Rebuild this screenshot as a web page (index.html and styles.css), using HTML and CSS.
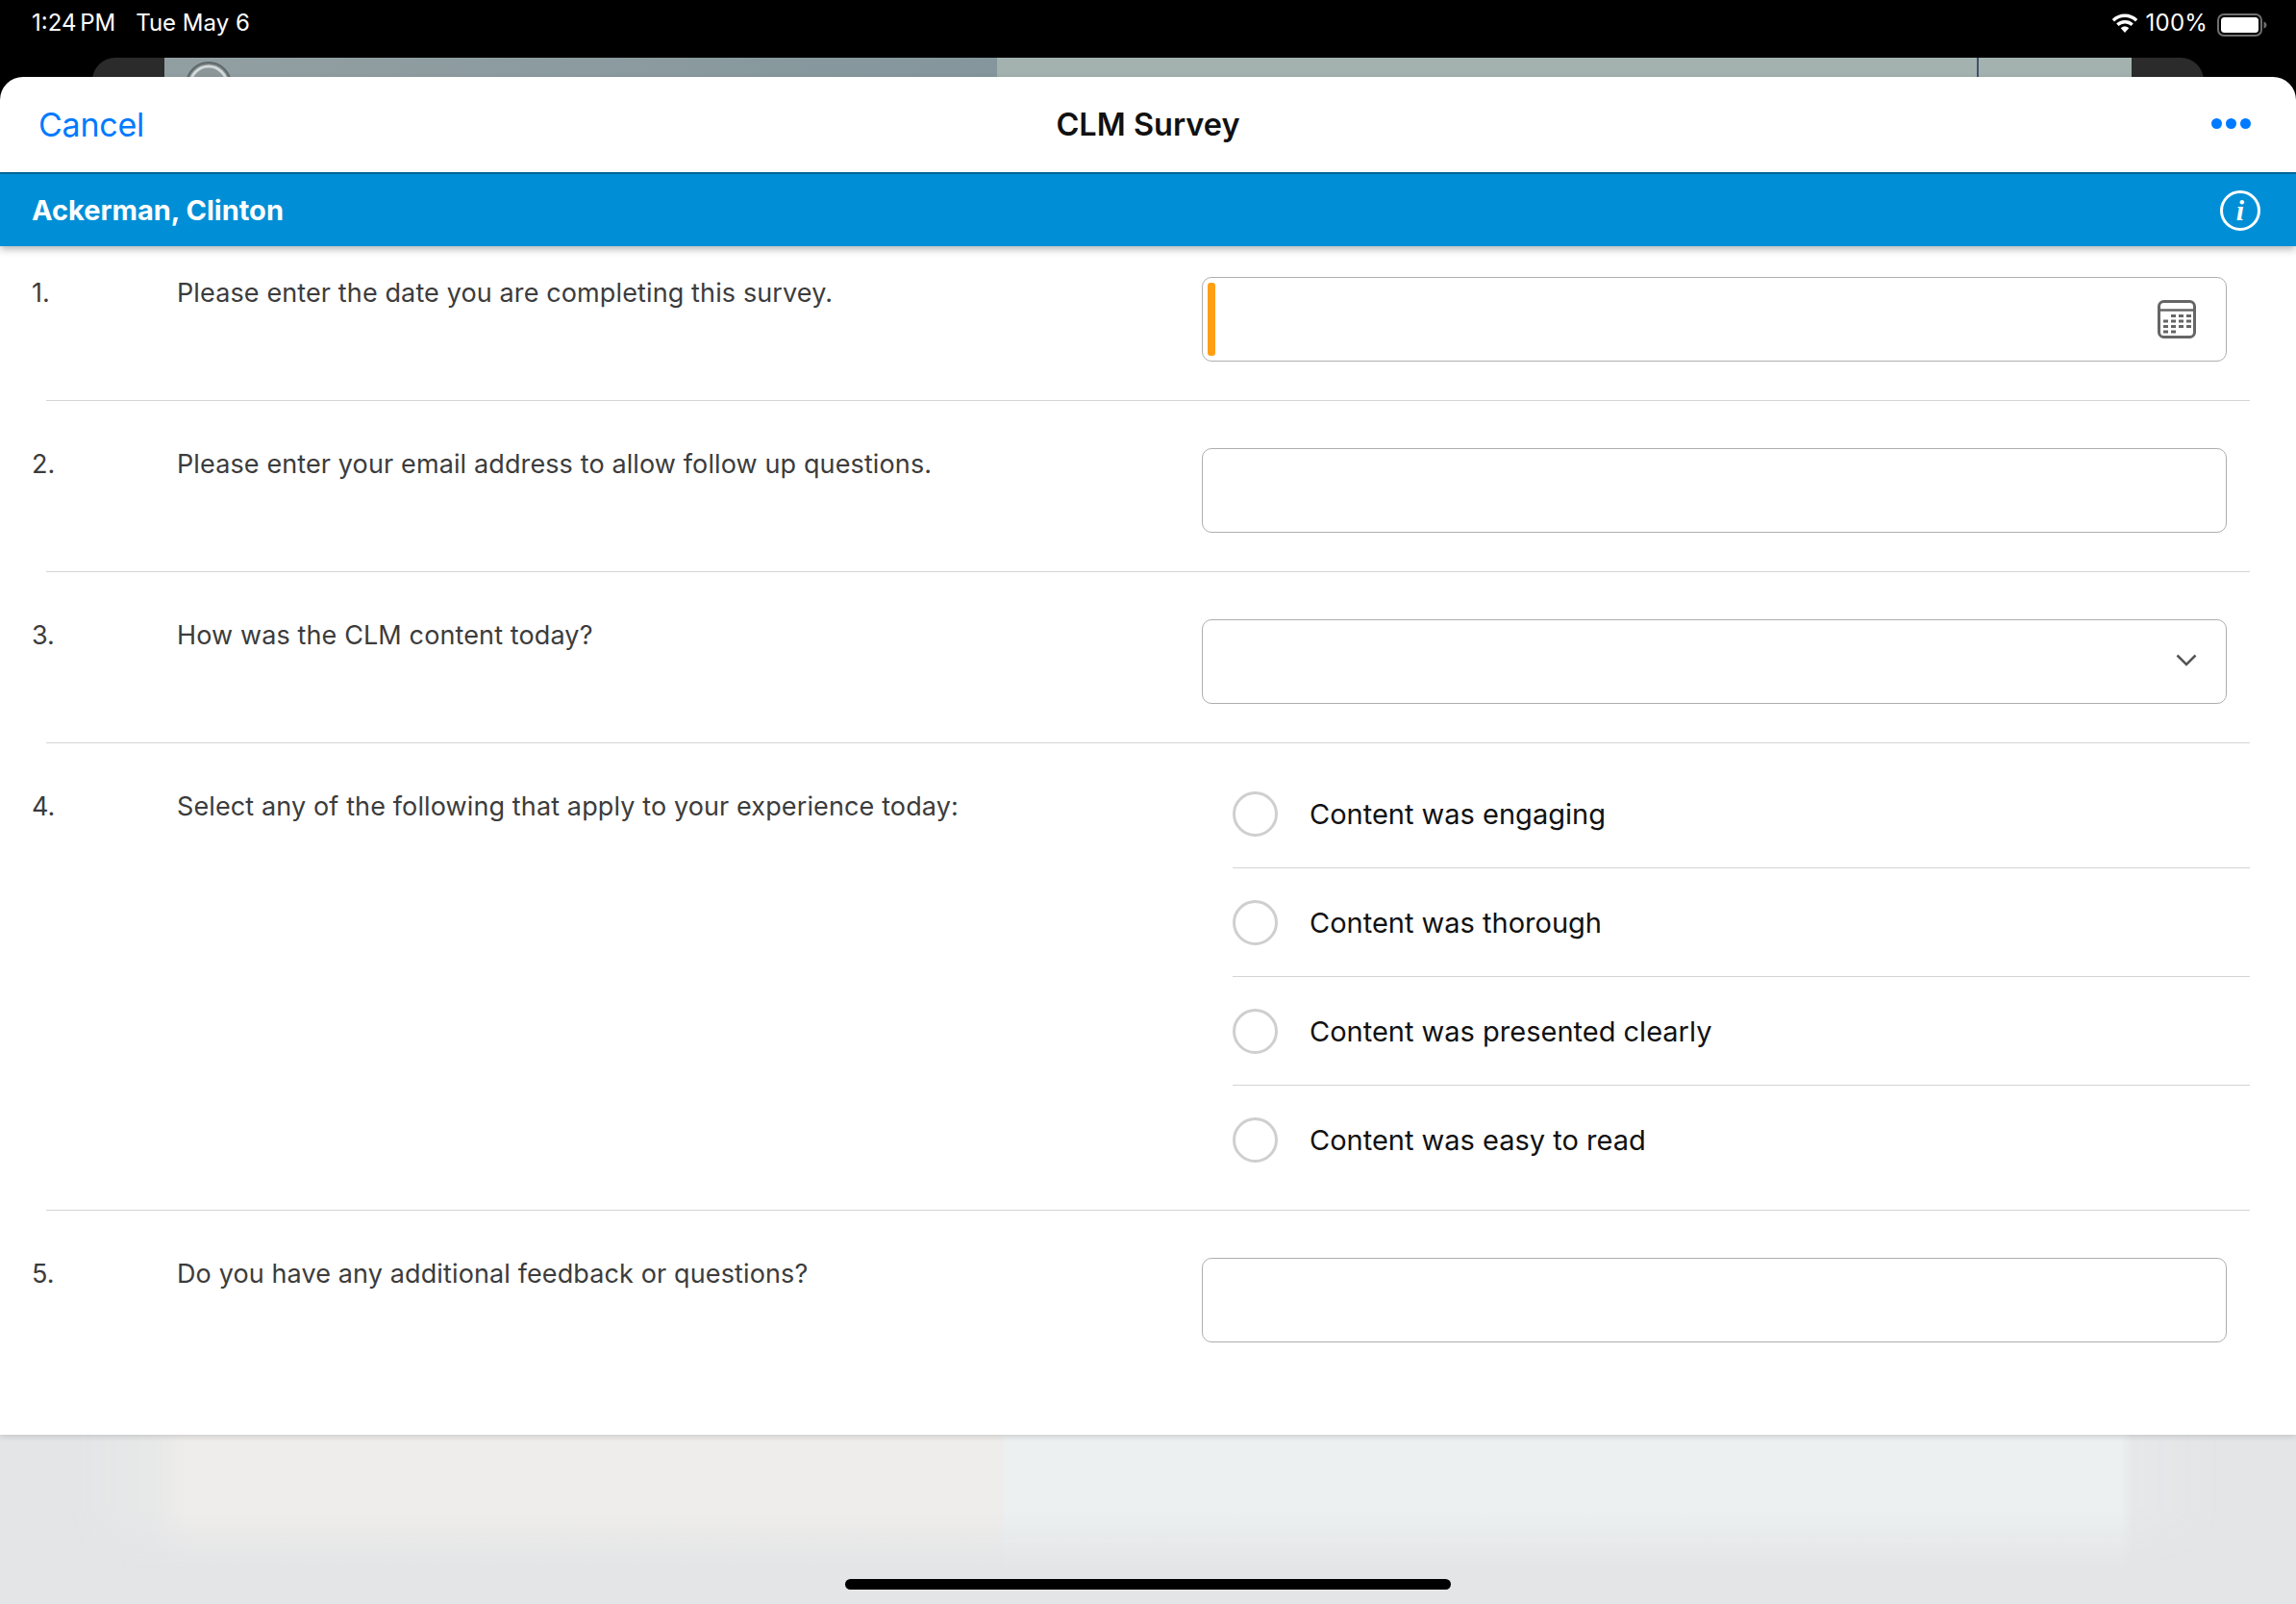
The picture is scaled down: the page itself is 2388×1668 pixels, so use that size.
FILE: index.html
```html
<!DOCTYPE html>
<html lang="en">
<head>
<meta charset="utf-8">
<title>CLM Survey</title>
<link rel="stylesheet" href="styles.css">
</head>
<body>
<header class="status">
  <div class="status-left"><span class="time">1:24 PM</span><span class="date">Tue May 6</span></div>
  <div class="status-right">
    <svg class="wifi" width="32" height="23" viewBox="0 0 28 20"><path fill="#fff" d="M14 4.400c3.700 0 7 1.400 9.600 3.800l2-2.200A16.800 16.800 0 0 0 14 1.200 16.800 16.800 0 0 0 2.400 6l2 2.200A13.900 13.900 0 0 1 14 4.400z"/><path fill="#fff" d="M14 9.900c2.200 0 4.200.8 5.700 2.200l2-2.200A11.300 11.300 0 0 0 14 6.900c-3 0-5.700 1.100-7.700 3l2 2.200A8.300 8.300 0 0 1 14 9.900z"/><path fill="#fff" d="M14 12.700c-1.400 0-2.700.5-3.700 1.400l3.700 4.200 3.700-4.200c-1-.9-2.300-1.400-3.700-1.400z"/></svg>
    <span class="pct">100%</span>
    <svg class="battery" width="52" height="24" viewBox="0 0 52 24"><rect x="1" y="1" width="45" height="22" rx="6" fill="none" stroke="#6e6e6e" stroke-width="2"/><rect x="4" y="4" width="39" height="16" rx="3.500" fill="#fff"/><path d="M48.500 8.500c2 .5 3 2 3 3.500s-1 3-3 3.500z" fill="#6e6e6e"/></svg>
  </div>
</header>
<div class="backdrop">
  <div class="bd-dark bd-dark-left"></div>
  <div class="bd-gray"><svg class="bd-avatar" width="48" height="20" viewBox="0 0 48 20"><circle cx="24" cy="28" r="23" fill="#7f8a8c" stroke="#5f686a" stroke-width="2"/><circle cx="24" cy="28" r="19" fill="#8d9799" stroke="#d3d8d8" stroke-width="3"/></svg></div>
  <div class="bd-green"><span class="bd-line"></span></div>
  <div class="bd-dark bd-dark-right"></div>
</div>
<main class="sheet">
  <nav class="nav">
    <a class="cancel">Cancel</a>
    <h1 class="title">CLM Survey</h1>
    <div class="dots"><i></i><i></i><i></i></div>
  </nav>
  <div class="banner">
    <span class="name">Ackerman, Clinton</span>
    <span class="info">i</span>
  </div>
  <section class="row row-first">
    <span class="num">1.</span>
    <p class="q">Please enter the date you are completing this survey.</p>
    <div class="field">
      <span class="required"></span>
      <svg class="cal" width="40" height="40" viewBox="0 0 40 40"><rect x="1.500" y="1.500" width="37" height="37" rx="5" fill="none" stroke="#666" stroke-width="3"/><path d="M2 10.500h36" stroke="#666" stroke-width="2.500"/><g fill="#666"><rect x="14" y="15" width="5" height="3"/><rect x="22" y="15" width="5" height="3"/><rect x="30" y="15" width="5" height="3"/><rect x="6" y="20.500" width="5" height="3"/><rect x="14" y="20.500" width="5" height="3"/><rect x="22" y="20.500" width="5" height="3"/><rect x="30" y="20.500" width="5" height="3"/><rect x="6" y="26" width="5" height="3"/><rect x="14" y="26" width="5" height="3"/><rect x="22" y="26" width="5" height="3"/><rect x="30" y="26" width="5" height="3"/><rect x="6" y="31.500" width="5" height="3"/><rect x="14" y="31.500" width="5" height="3"/></g></svg>
    </div>
  </section>
  <hr class="divider">
  <section class="row">
    <span class="num">2.</span>
    <p class="q">Please enter your email address to allow follow up questions.</p>
    <div class="field"></div>
  </section>
  <hr class="divider">
  <section class="row">
    <span class="num">3.</span>
    <p class="q">How was the CLM content today?</p>
    <div class="field">
      <svg class="chev" width="22" height="13" viewBox="0 0 22 13"><path d="M1.500 1.500 11 11l9.500-9.500" fill="none" stroke="#555" stroke-width="2.500"/></svg>
    </div>
  </section>
  <hr class="divider">
  <section class="row row-options">
    <span class="num">4.</span>
    <p class="q">Select any of the following that apply to your experience today:</p>
    <ul class="options">
      <li class="option"><span class="radio"></span><span>Content was engaging</span></li>
      <li class="option"><span class="radio"></span><span>Content was thorough</span></li>
      <li class="option"><span class="radio"></span><span>Content was presented clearly</span></li>
      <li class="option"><span class="radio"></span><span>Content was easy to read</span></li>
    </ul>
  </section>
  <hr class="divider">
  <section class="row">
    <span class="num">5.</span>
    <p class="q">Do you have any additional feedback or questions?</p>
    <div class="field"></div>
  </section>
</main>
<footer class="bottom">
  <div class="blur"><div class="blur-warm"></div><div class="blur-cool"></div></div>
  <div class="home"></div>
</footer>
</body>
</html>
```
FILE: styles.css
```css
* { box-sizing: border-box; }
html, body { margin: 0; padding: 0; }
body {
  width: 2388px;
  height: 1668px;
  overflow: hidden;
  background: #000;
  font-family: Inter, Roboto, "Liberation Sans", sans-serif;
}
.status {
  height: 60px;
  display: flex;
  justify-content: space-between;
  align-items: flex-start;
  padding: 9px 30px 0 33px;
  color: #fff;
  font-size: 24px;
  line-height: 30px;
}
.status-left { display: flex; gap: 21px; }
.time { word-spacing: -3px; }
.status-right { display: flex; align-items: center; }
.wifi { margin-right: 6px; margin-top: 1px; }
.pct { margin-right: 10px; letter-spacing: .2px; }
.battery { margin-top: 3px; }

.backdrop {
  height: 20px;
  display: flex;
  padding-left: 96px;
  overflow: hidden;
}
.bd-dark { width: 75px; height: 40px; background: #2b2b2b; }
.bd-dark-left { border-top-left-radius: 24px; }
.bd-dark-right { border-top-right-radius: 24px; }
.bd-gray {
  width: 866px;
  padding-left: 22px;
  background: linear-gradient(90deg, #929fa2, #8a9a9f 60%, #84969c);
}
.bd-avatar { display: block; }
.bd-green {
  width: 1180px;
  padding-left: 1019px;
  background: #a3b2ae;
}
.bd-line { display: block; width: 2px; height: 20px; background: #3f5270; }

.sheet {
  height: 1412px;
  background: #fff;
  border-radius: 24px 24px 0 0;
  box-shadow: 0 2px 6px rgba(0, 0, 0, .14);
  position: relative;
  z-index: 1;
}
.nav {
  height: 101px;
  display: flex;
  align-items: center;
  justify-content: space-between;
  padding: 0 47px 0 40px;
  border-bottom: 2px solid #006a9e;
  position: relative;
}
.cancel { color: #007aff; font-size: 34px; line-height: 42px; letter-spacing: -.25px; }
.title {
  margin: 0;
  font-size: 32.500px;
  font-weight: 600;
  line-height: 40px;
  color: #111;
  position: absolute;
  left: 0;
  right: 0;
  text-align: center;
}
.dots { display: flex; gap: 4px; margin-bottom: 2px; }
.dots i { width: 11px; height: 11px; border-radius: 50%; background: #007aff; }
.banner {
  height: 75px;
  background: #008fd6;
  display: flex;
  align-items: center;
  justify-content: space-between;
  padding: 0 37px 0 33px;
  box-shadow: 0 3px 8px rgba(0, 0, 0, .3);
  color: #fff;
  position: relative;
}
.name { font-size: 29px; font-weight: 700; }
.info {
  width: 42px;
  height: 42px;
  border: 3px solid #fff;
  border-radius: 50%;
  display: flex;
  align-items: center;
  justify-content: center;
  font-family: "Liberation Serif", serif;
  font-style: italic;
  font-weight: 700;
  font-size: 30px;
  line-height: 1;
}
.row {
  display: flex;
  align-items: flex-start;
  padding: 49px 0 40px 33px;
}
.row-first { padding-top: 32px; }
.row-options { padding-top: 17px; padding-bottom: 17px; }
.row-options .num, .row-options .q { margin-top: 32px; }
.num {
  flex: 0 0 151px;
  font-size: 27px;
  line-height: 34px;
  color: #3c3c3c;
}
.q {
  flex: 0 0 1066px;
  margin: 0;
  font-size: 27px;
  line-height: 34px;
  letter-spacing: .12px;
  color: #3c3c3c;
}
.field {
  flex: 0 0 1066px;
  height: 88px;
  border: 1px solid #aeaeae;
  border-radius: 10px;
  display: flex;
  align-items: center;
  justify-content: space-between;
  padding: 0 31px 0 5px;
}
.required { width: 8px; height: 76px; background: #ff9f14; border-radius: 3px; }
.cal { display: block; }
.chev { margin-left: auto; margin-right: -1px; margin-bottom: 3px; }
.divider {
  margin: 0 48px;
  height: 1px;
  border: 0;
  background: #d4d4d4;
}
.options {
  list-style: none;
  margin: 0 0 0 32px;
  padding: 0;
  flex: 0 0 1058px;
}
.option {
  height: 113px;
  display: flex;
  align-items: center;
  gap: 33px;
  font-size: 29px;
  color: #111;
  border-bottom: 1px solid #d4d4d4;
}
.option:last-child { border-bottom: 0; height: 112px; }
.radio {
  width: 47px;
  height: 47px;
  border: 3px solid #cfcfcf;
  border-radius: 50%;
}
.bottom {
  height: 176px;
  background: #e4e5e7;
  position: relative;
  overflow: hidden;
}
.blur {
  height: 140px;
  margin: 0 70px;
  display: flex;
}
.blur-warm {
  width: 974px;
  background: linear-gradient(to bottom, #eeedeb 55%, rgba(238, 237, 235, 0));
  -webkit-mask-image: linear-gradient(to right, transparent, rgba(0, 0, 0, .4) 90px, #000 125px);
  mask-image: linear-gradient(to right, transparent, rgba(0, 0, 0, .4) 90px, #000 125px);
}
.blur-cool {
  flex: 1;
  background: linear-gradient(to bottom, #ecf0f1 55%, rgba(236, 240, 241, 0));
  -webkit-mask-image: linear-gradient(to left, transparent, rgba(0, 0, 0, .25) 100px, #000 112px);
  mask-image: linear-gradient(to left, transparent, rgba(0, 0, 0, .25) 100px, #000 112px);
}
.home {
  position: absolute;
  left: 879px;
  top: 150px;
  width: 630px;
  height: 11px;
  border-radius: 6px;
  background: #000;
}
```
